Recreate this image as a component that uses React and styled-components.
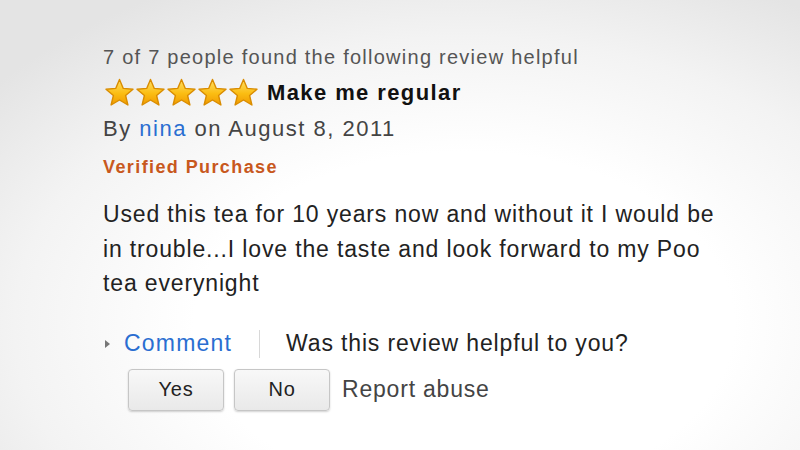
import React from "react";
import styled, { createGlobalStyle } from "styled-components";

const Global = createGlobalStyle`
  html, body { margin: 0; padding: 0; }
  body {
    width: 800px;
    height: 450px;
    overflow: hidden;
    font-family: "Liberation Sans", Arial, sans-serif;
    background: radial-gradient(ellipse 75% 85% at 58% 72%, #ffffff 45%, #f3f3f3 75%, #e4e4e4 100%);
  }
`;

const Page = styled.div`
  width: 800px;
  height: 450px;
  box-sizing: border-box;
  padding: 46px 0 0 103px;
  display: flex;
  flex-direction: column;
`;

const Helpful = styled.div`
  font-size: 20px;
  letter-spacing: 1.25px;
  color: #555;
  line-height: 22px;
`;

const TitleRow = styled.div`
  display: flex;
  align-items: center;
  gap: 8px;
  margin-top: 10px;
  height: 30px;
`;

const Stars = styled.div`
  display: flex;
  margin-left: 1px;
`;

const Title = styled.span`
  font-size: 22px;
  font-weight: bold;
  letter-spacing: 1.4px;
  color: #111;
`;

const Byline = styled.div`
  font-size: 22px;
  letter-spacing: 1.5px;
  color: #444;
  margin-top: 9px;
  line-height: 24px;
`;

const Link = styled.a`
  color: #2a6ed1;
  text-decoration: none;
`;

const Verified = styled.div`
  font-size: 18px;
  font-weight: bold;
  letter-spacing: 1.4px;
  color: #c8581d;
  margin-top: 16px;
  line-height: 20px;
`;

const Body = styled.p`
  margin: 20px 0 0;
  width: 630px;
  font-size: 23px;
  letter-spacing: 0.85px;
  line-height: 34.5px;
  color: #222;
`;

const ActionRow = styled.div`
  display: flex;
  align-items: center;
  margin-top: 28px;
  height: 30px;
`;

const Caret = styled.span`
  width: 0;
  height: 0;
  border-top: 4px solid transparent;
  border-bottom: 4px solid transparent;
  border-left: 5px solid #777;
  margin-left: 2px;
  margin-right: 14px;
`;

const CommentLink = styled.a`
  font-size: 23px;
  letter-spacing: 1.2px;
  color: #2a6ed1;
  text-decoration: none;
`;

const Divider = styled.span`
  width: 1px;
  height: 28px;
  background: #d8d8d8;
  margin: 0 26px 0 27px;
`;

const Question = styled.span`
  font-size: 23px;
  letter-spacing: 0.85px;
  color: #222;
`;

const ButtonRow = styled.div`
  display: flex;
  align-items: center;
  gap: 10px;
  margin-top: 10px;
  margin-left: 25px;
`;

const Button = styled.button`
  width: 96px;
  height: 42px;
  border: 1px solid #c6c6c6;
  border-radius: 4px;
  background: linear-gradient(#f8f8f8, #e9e9e9);
  box-shadow: 0 1px 2px rgba(0, 0, 0, 0.18);
  font-family: "Liberation Sans", Arial, sans-serif;
  font-size: 20px;
  letter-spacing: 0.8px;
  color: #222;
  padding: 0;
`;

const Report = styled.span`
  font-size: 23px;
  letter-spacing: 0.8px;
  color: #444;
  margin-left: 2px;
`;

const Star = () => (
  <svg width="31" height="31" viewBox="0 0 31 31">
    <defs>
      <linearGradient id="sg" x1="0" y1="0" x2="0" y2="1">
        <stop offset="0" stopColor="#ffe066" />
        <stop offset="0.55" stopColor="#fbbd12" />
        <stop offset="1" stopColor="#f09a00" />
      </linearGradient>
    </defs>
    <path
      d="M15.5 1.5 L19.3 10.4 L29 11.2 L21.6 17.5 L23.9 27 L15.5 22 L7.1 27 L9.4 17.5 L2 11.2 L11.7 10.4 Z"
      fill="url(#sg)"
      stroke="#d98c00"
      strokeWidth="1.4"
      strokeLinejoin="round"
    />
  </svg>
);

export default function App() {
  return (
    <>
      <Global />
      <Page>
        <Helpful>7 of 7 people found the following review helpful</Helpful>
        <TitleRow>
          <Stars>
            {[0, 1, 2, 3, 4].map((i) => (
              <Star key={i} />
            ))}
          </Stars>
          <Title>Make me regular</Title>
        </TitleRow>
        <Byline>
          By <Link href="#">nina</Link> on August 8, 2011
        </Byline>
        <Verified>Verified Purchase</Verified>
        <Body>
          Used this tea for 10 years now and without it I would be in
          trouble...I love the taste and look forward to my Poo tea everynight
        </Body>
        <ActionRow>
          <Caret />
          <CommentLink href="#">Comment</CommentLink>
          <Divider />
          <Question>Was this review helpful to you?</Question>
        </ActionRow>
        <ButtonRow>
          <Button>Yes</Button>
          <Button>No</Button>
          <Report>Report abuse</Report>
        </ButtonRow>
      </Page>
    </>
  );
}
